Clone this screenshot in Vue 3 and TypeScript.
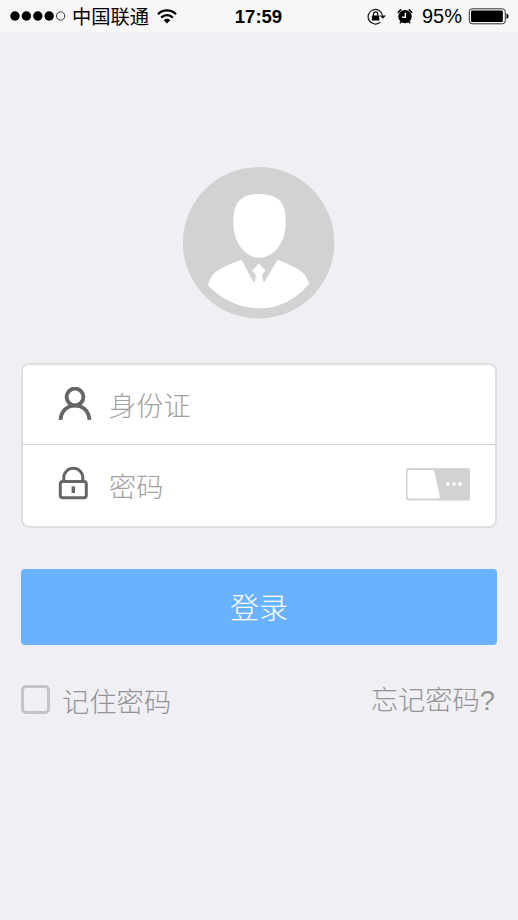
<script setup lang="ts">
import { ref } from 'vue'

const signal = [true, true, true, true, false]
const remember = ref(false)
const fields = [
  { id: 'identity', label: '身份证' },
  { id: 'password', label: '密码' },
]
</script>

<template>
  <div class="screen">
    <header class="status">
      <div class="side left">
        <svg class="signal" width="56" height="12" viewBox="0 0 56 12">
          <circle
            v-for="(on, i) in signal"
            :key="i"
            :cx="5 + i * 11.4"
            cy="6"
            :r="on ? 4.7 : 4.2"
            :fill="on ? '#000' : 'none'"
            :stroke="on ? 'none' : '#222'"
            stroke-width="0.9"
          />
        </svg>
        <span class="carrier">中国联通</span>
        <svg class="wifi" width="20" height="15" viewBox="0 0 20 15">
          <g fill="none" stroke="#000" stroke-width="2.2">
            <path d="M1 5.2a12.7 12.7 0 0 1 18 0" />
            <path d="M4.2 8.6a8.2 8.2 0 0 1 11.6 0" />
          </g>
          <path d="M6.8 11.2a4.5 4.5 0 0 1 6.4 0L10 14.4Z" />
        </svg>
      </div>
      <span class="time">17:59</span>
      <div class="side right">
        <svg class="rotation" width="20" height="17" viewBox="0 0 20 17">
          <path d="M15.6 7.500a7.300 7.300 0 1 0-2.200 6.600" fill="none" stroke="#111" stroke-width="1.2" />
          <path d="M12.600 7.400h6.400L15.900 10.800Z" fill="#111" />
          <path d="M4.900 7.500h7.400v5H4.900z" />
          <path d="M6.500 8V6a2.100 2.100 0 0 1 4.200 0v2" fill="none" stroke="#111" stroke-width="1.2" />
        </svg>
        <svg class="alarm" width="16" height="16" viewBox="0 0 16 16">
          <circle cx="8" cy="8.600" r="6.700" />
          <path d="M.9 4.900A8.500 8.500 0 0 1 4.300 1.300M15.100 4.900a8.500 8.500 0 0 0-3.400-3.600" fill="none" stroke="#000" stroke-width="1.5" />
          <path d="m2.800 15.200 2-2M13.200 15.200l-2-2" stroke="#000" stroke-width="1.4" />
          <path d="M8.400 4.800v4.400H5.200" fill="none" stroke="#fff" stroke-width="1.4" />
        </svg>
        <span class="percent">95%</span>
        <svg class="battery" width="41" height="17" viewBox="0 0 41 17">
          <rect x="1.300" y="0.8" width="36" height="15" rx="3" fill="none" stroke="#333" stroke-width="1" />
          <rect x="3" y="2.5" width="31.8" height="11.6" rx="1.2" />
          <path d="M38.500 5.600c2.600.7 2.600 4.800 0 5.500Z" />
        </svg>
      </div>
    </header>

    <main>
      <svg class="avatar" width="152" height="152" viewBox="0 0 152 152">
        <circle cx="75.600" cy="75.800" r="75.700" fill="#d2d2d2" />
        <path
          d="M76.500 27C90.500 27 98 32 101 41C103 47 103 56 102.200 63C100 78 89.500 90.700 76.500 90.700C63.500 90.700 53 78 50.800 63C50 56 50 47 52 41C55.500 32 62.500 27 76.500 27Z"
          fill="#fff"
        />
        <path
          d="M58.500 92.800L70.300 115L72 114L72.800 108L69.300 103.500L75.800 96.700L82.500 103.500L79 108L80 114L81.500 115L94.500 92.800C102 96 114 100 121 107C123.500 110 126 115 126 117C111 134 95 141.300 76.500 141.300C58 141.300 39 133 25 118.500C26.500 114 27.500 110 31.500 106C39 100 50 96 58.500 92.800Z"
          fill="#fff"
        />
      </svg>

      <section class="card">
        <div v-for="field in fields" :key="field.id" class="field" :class="field.id">
          <svg v-if="field.id === 'identity'" class="icon" width="36" height="36" viewBox="0 0 36 36">
            <g fill="none" stroke="#666" stroke-width="3.9">
              <circle cx="18" cy="10" r="8.400" />
              <path d="M3.500 32.800C4.200 24 10 18.600 18 18.600s13.800 5.400 14.500 14.200" />
            </g>
          </svg>
          <svg v-else class="icon" width="36" height="36" viewBox="0 0 36 36">
            <g fill="none" stroke="#666">
              <rect x="3.300" y="15.500" width="26" height="16.300" rx="2.500" stroke-width="3" />
              <path d="M6.800 15V11.700a9.500 9.500 0 0 1 19 0V15" stroke-width="3" />
              <path d="M16.300 20.400v6.600" stroke-width="3.400" />
            </g>
          </svg>
          <span class="placeholder">{{ field.label }}</span>
          <svg v-if="field.id === 'password'" class="toggle" width="64" height="33" viewBox="0 0 64 33">
            <rect width="64" height="32.600" rx="2.500" fill="#d2d2d2" />
            <path d="M3.500 2h22.500q2 0 2.500 2l5.300 24.500q.4 2-1.500 2H3.500q-2 0-2-2V4q0-2 2-2Z" fill="#fff" />
            <g fill="#fff">
              <ellipse cx="42" cy="16" rx="1.700" ry="2" />
              <ellipse cx="48" cy="16" rx="1.700" ry="2" />
              <ellipse cx="54" cy="16" rx="1.700" ry="2" />
            </g>
          </svg>
        </div>
      </section>

      <button class="login" type="button">登录</button>

      <div class="options">
        <label class="remember">
          <input v-model="remember" type="checkbox" />
          <span>记住密码</span>
        </label>
        <span class="forgot">忘记密码?</span>
      </div>
    </main>
  </div>
</template>

<style>
body {
  background: #efeff4;
}
</style>

<style scoped>
.screen {
  box-sizing: border-box;
  width: 518px;
  height: 920px;
  overflow: hidden;
  background: #efeff4;
  font-family: "Liberation Sans", "Noto Sans CJK SC", sans-serif;
  font-weight: 300;
}
.status {
  display: grid;
  grid-template-columns: 1fr auto 1fr;
  align-items: center;
  box-sizing: border-box;
  height: 32px;
  padding: 0 9px 0 10px;
  background: #f7f7f7;
  color: #000;
}
.side {
  display: flex;
  align-items: center;
  height: 32px;
}
.right {
  justify-content: flex-end;
}
.signal {
  margin-right: 6px;
}
.carrier {
  padding-top: 4px;
  font-size: 19.3px;
  font-weight: 400;
  line-height: 32px;
}
.wifi {
  margin-left: 8px;
}
.time {
  padding-top: 2px;
  margin-right: 2px;
  font-size: 18.5px;
  font-weight: 700;
}
.alarm {
  margin: 0 9px 0 10px;
}
.percent {
  padding-top: 1px;
  margin-right: 6px;
  font-size: 20px;
}
main {
  display: flex;
  flex-direction: column;
  padding: 135px 21px 0;
}
.avatar {
  align-self: center;
}
.card {
  box-sizing: border-box;
  height: 165px;
  margin-top: 44px;
  border: 2px solid #dfdfe2;
  border-radius: 8px;
  background: #fff;
}
.field {
  display: flex;
  align-items: center;
  box-sizing: border-box;
  height: 79px;
  padding: 0 25px 0 34px;
}
.password {
  height: 82px;
  border-top: 1px solid #cecece;
}
.password .icon {
  margin-bottom: 3px;
}
.placeholder {
  padding-top: 4px;
  margin-left: 16px;
  color: #a2a2a2;
  font-size: 27.2px;
  line-height: 40px;
}
.toggle {
  margin-bottom: 2px;
  margin-left: auto;
}
.login {
  height: 76px;
  margin-top: 41px;
  padding: 0 0 2px;
  border: 0;
  border-radius: 4px;
  background: #69b2ff;
  color: #fff;
  font: inherit;
  font-size: 29px;
}
.options {
  display: flex;
  align-items: center;
  justify-content: space-between;
  height: 40px;
  margin-top: 35px;
  color: #949494;
  font-size: 27.3px;
  line-height: 40px;
}
.remember {
  display: flex;
  align-items: center;
  gap: 12px;
}
.remember span {
  padding-top: 5px;
}
.remember input {
  appearance: none;
  box-sizing: border-box;
  width: 29px;
  height: 29px;
  margin: 0 0 1px;
  border: 3px solid #c4c4c4;
  border-radius: 5px;
}
.remember input:checked {
  background: #69b2ff;
}
.forgot {
  padding-top: 2px;
  margin-right: 2px;
}
</style>
